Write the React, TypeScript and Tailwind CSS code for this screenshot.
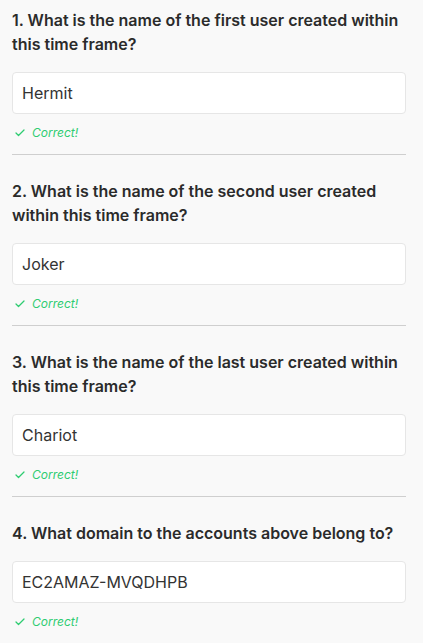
import React from 'react';

const QUESTIONS = [
  { id: 1, title: 'What is the name of the first user created within this time frame?', answer: 'Hermit' },
  { id: 2, title: 'What is the name of the second user created within this time frame?', answer: 'Joker' },
  { id: 3, title: 'What is the name of the last user created within this time frame?', answer: 'Chariot' },
  { id: 4, title: 'What domain to the accounts above belong to?', answer: 'EC2AMAZ-MVQDHPB' },
];

const Check = () => (
  <svg width="12" height="12" viewBox="0 0 24 24" fill="none" stroke="currentColor" strokeWidth="2.5" strokeLinecap="round" strokeLinejoin="round">
    <path d="M20 6 9 17l-5-5" />
  </svg>
);

const Question: React.FC<{ item: typeof QUESTIONS[0]; last: boolean }> = ({ item, last }) => (
  <div className={last ? '' : 'pb-[12px] border-b border-[#cfcfcf]'}>
    <h3 className="text-[16px] leading-[24px] font-semibold text-[#2b2b2b]">
      {item.id}. {item.title}
    </h3>
    <div className="mt-[16px] h-[42px] flex items-center px-[9px] bg-white border border-[#e6e6e6] rounded-[4px] text-[16px] text-[#333]">
      {item.answer}
    </div>
    <div className="mt-[10px] flex items-center gap-[6px] pl-[2px] text-[12px] italic text-[#2ecc71]">
      <Check />
      <span>Correct!</span>
    </div>
  </div>
);

const App: React.FC = () => (
  <div className="min-h-screen bg-[#f9f9f9] pt-[8px] pl-[12px] pr-[17px] font-['Inter',sans-serif]">
    <div className="flex flex-col gap-[24px]">
      {QUESTIONS.map((q, i) => (
        <Question key={q.id} item={q} last={i === QUESTIONS.length - 1} />
      ))}
    </div>
  </div>
);

export default App;
